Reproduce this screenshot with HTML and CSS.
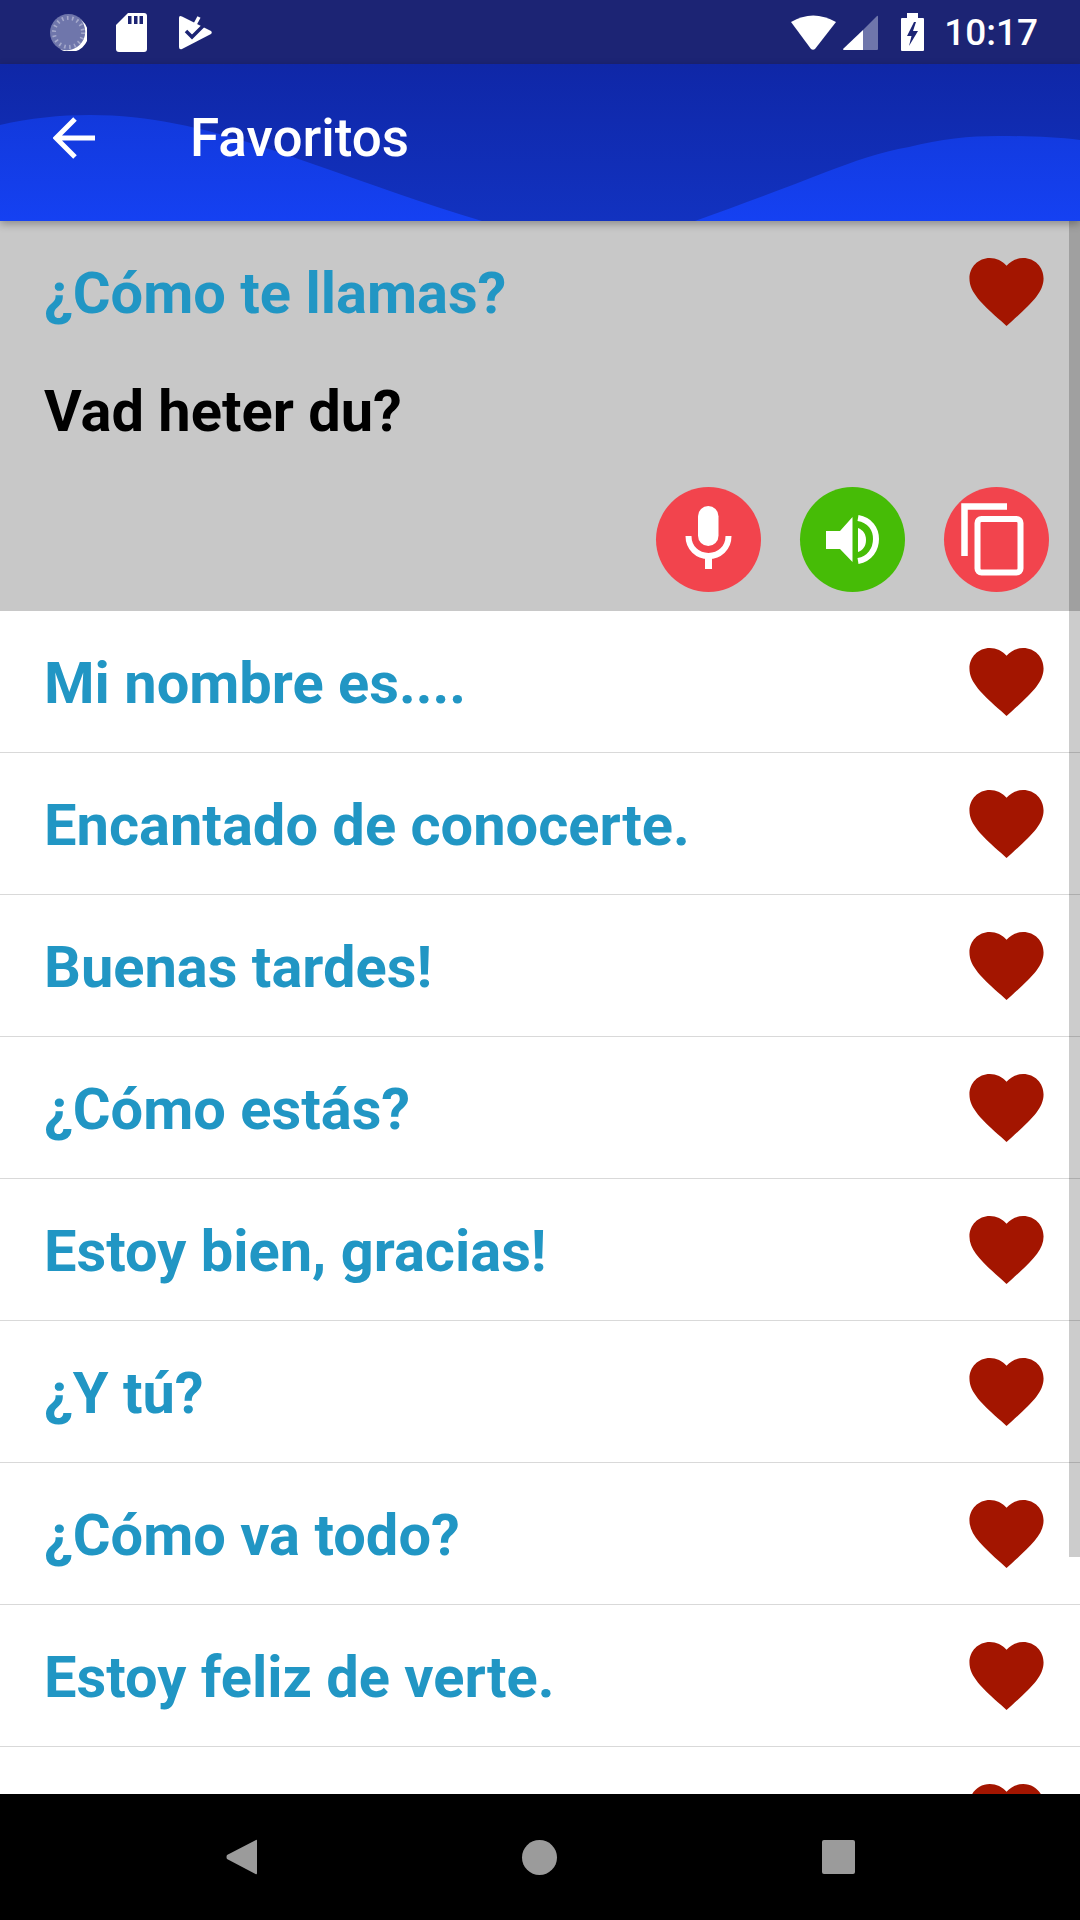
FILE: index.html
```html
<!DOCTYPE html>
<html>
    <head>
        <meta charset="utf-8">
        <title>Favoritos</title>
        <link rel="stylesheet" href="styles.css">
    </head>
    <body>
        <svg class="defs" width="0" height="0">
            <defs>
                <linearGradient id="waveFill" x1="0" y1="0" x2="0" y2="1">
                    <stop offset="0" stop-color="#1239dc"/>
                    <stop offset="1" stop-color="#1541f2"/>
                </linearGradient>
            </defs>
            <symbol id="heart" viewBox="2 3 20 18.35">
                <path d="M12 21.35l-1.45-1.32C5.4 15.36 2 12.28 2 8.5 2 5.42 4.42 3 7.5 3c1.74 0 3.41.81 4.5 2.09C13.09 3.81 14.76 3 16.5 3 19.58 3 22 5.42 22 8.5c0 3.78-3.4 6.86-8.55 11.54L12 21.35z"/>
            </symbol>
        </svg>

        <div id="statusBar">
            <svg class="moon" width="37" height="37" viewBox="0 0 37 37">
                <circle cx="18.5" cy="18.5" r="18.5" fill="#6f76ab"/>
                <path d="M31 6a18.5 18.5 0 0 1-21 29 18.5 18.5 0 0 0 27-8 18 18 0 0 0-6-21z" fill="#fff"/>
                <circle cx="18.5" cy="18.5" r="14.5" fill="none" stroke="#a5a9cb" stroke-width="4" stroke-dasharray="1.6 3.5"/>
            </svg>
            <svg class="sd" width="31" height="39" viewBox="0 0 31 39">
                <path d="M12 0H28a3 3 0 0 1 3 3V36a3 3 0 0 1-3 3H3a3 3 0 0 1-3-3V12z" fill="#fff"/>
                <path d="M12 3h3.500v8H12zM18 3h3.500v8H18zM23.500 3H27v8h-3.500z" fill="#1c2474"/>
            </svg>
            <svg class="tasks" width="33" height="35" viewBox="0 0 33 35">
                <path d="M0 3Q0 0 3 1.500L32 16Q33.500 17.500 32 19L3 34Q0 35 0 32z" fill="#fff"/>
                <path d="M7 16l6 6 11-11" fill="none" stroke="#1c2474" stroke-width="3.500"/>
                <path d="M13 15l7-13" fill="none" stroke="#fff" stroke-width="3.500"/>
            </svg>
            <div class="statusRight">
                <svg class="wifi" width="45" height="36" viewBox="0 0 45 36">
                    <path d="M0 8Q22 -5 45 8L24 35q-2 1.500-4 0z" fill="#fff"/>
                </svg>
                <svg class="signal" width="35" height="36" viewBox="0 0 35 36">
                    <path d="M20 16L34 2q1-1 1 1V35q0 1-1 1H20z" fill="#6f76ab"/>
                    <path d="M0 35L20 16V36H1q-1 0-1-1z" fill="#fff"/>
                </svg>
                <svg class="battery" width="23" height="38" viewBox="0 0 23 38">
                    <path d="M6 0h11v5h5a1 1 0 0 1 1 1V37a1 1 0 0 1-1 1H1a1 1 0 0 1-1-1V6a1 1 0 0 1 1-1h5z" fill="#fff"/>
                    <path d="M13 9L6 23h4.500L8 33l9-15h-5l3-9z" fill="#1c2474"/>
                </svg>
                <span class="time">10:17</span>
            </div>
        </div>

        <div id="toolBar">
            <svg class="wave" width="1080" height="157" viewBox="0 0 1080 157">
                <path d="M0 61C30 54 60 51 90 51C170 51 245 76 310 99C370 120 425 140 482 157L695 157C740 141 785 124 826 108C855 97 880 88 909 83C940 75 970 72 998 72C1030 72 1055 73 1080 76V157H0z" fill="url(#waveFill)"/>
            </svg>
            <svg class="backArrow" width="42" height="42" viewBox="0 0 42 42">
                <path d="M42 21H3M22 2L3 21l19 19" fill="none" stroke="#fff" stroke-width="5"/>
            </svg>
            <span class="title">Favoritos</span>
        </div>

        <div id="list">
            <div class="scrollThumb"></div>

            <div class="row selected">
                <div class="rowTop">
                    <span class="phrase">¿Cómo te llamas?</span>
                    <svg class="heart"><use href="#heart"/></svg>
                </div>
                <div class="translation">Vad heter du?</div>
                <div class="actions">
                    <div class="roundBtn red">
                        <svg width="105" height="105" viewBox="0 0 105 105">
                            <rect x="42" y="19" width="20.500" height="40" rx="10.250" fill="#fff"/>
                            <path d="M32.500 49c0 12 9 20 20 20s20-8 20-20" fill="none" stroke="#fff" stroke-width="6"/>
                            <path d="M52.500 68V82" fill="none" stroke="#fff" stroke-width="7"/>
                        </svg>
                    </div>
                    <div class="roundBtn green">
                        <svg width="105" height="105" viewBox="0 0 105 105">
                            <path d="M26 44H40L52.500 30V75L40 62H26z" fill="#fff"/>
                            <path d="M58 41c5 2 8 6 8 12s-3 10-8 12z" fill="#fff"/>
                            <path d="M58 31c12 2 18 11 18 21s-6 20-18 22" fill="none" stroke="#fff" stroke-width="6"/>
                        </svg>
                    </div>
                    <div class="roundBtn red">
                        <svg width="105" height="105" viewBox="0 0 105 105">
                            <path d="M63 19.500H20.500V69" fill="none" stroke="#fff" stroke-width="6.500"/>
                            <rect x="33.500" y="32" width="43" height="53.500" rx="4" fill="none" stroke="#fff" stroke-width="6"/>
                        </svg>
                    </div>
                </div>
            </div>

            <div class="row"><span class="phrase">Mi nombre es....</span><svg class="heart"><use href="#heart"/></svg></div>
            <div class="row"><span class="phrase">Encantado de conocerte.</span><svg class="heart"><use href="#heart"/></svg></div>
            <div class="row"><span class="phrase">Buenas tardes!</span><svg class="heart"><use href="#heart"/></svg></div>
            <div class="row"><span class="phrase">¿Cómo estás?</span><svg class="heart"><use href="#heart"/></svg></div>
            <div class="row"><span class="phrase">Estoy bien, gracias!</span><svg class="heart"><use href="#heart"/></svg></div>
            <div class="row"><span class="phrase">¿Y tú?</span><svg class="heart"><use href="#heart"/></svg></div>
            <div class="row"><span class="phrase">¿Cómo va todo?</span><svg class="heart"><use href="#heart"/></svg></div>
            <div class="row"><span class="phrase">Estoy feliz de verte.</span><svg class="heart"><use href="#heart"/></svg></div>
            <div class="row"><svg class="heart"><use href="#heart"/></svg></div>
        </div>

        <div id="navBar">
            <svg class="navIcon" width="31" height="36" viewBox="0 0 31 36">
                <path d="M30 1Q31 0 31 2V34Q31 36 29.500 35L1 20Q0 18 1 16z" fill="#9b9b9b"/>
            </svg>
            <div class="navCircle"></div>
            <div class="navSquare"></div>
        </div>
    </body>
</html>
```

FILE: styles.css
```css
*{
    box-sizing:border-box;
}

body{
    margin:0px;
    padding:0px;
    width:1080px;
    height:1920px;
    display:flex;
    flex-direction:column;
    overflow:hidden;
    font-family:"Roboto", "Liberation Sans", sans-serif;
    background-color:white;
}

.defs{
    position:absolute;
}

#statusBar{
    height:64px;
    flex:none;
    display:flex;
    align-items:center;
    padding-left:50px;
    padding-right:42px;
    background-color:#1c2474;
}

.sd{
    margin-left:29px;
}

.tasks{
    margin-left:32px;
}

.statusRight{
    margin-left:auto;
    display:flex;
    align-items:center;
}

.signal{
    margin-left:7px;
}

.battery{
    margin-left:23px;
}

.time{
    margin-left:20px;
    color:white;
    font-size:37px;
    font-weight:500;
}

#toolBar{
    position:relative;
    z-index:2;
    height:157px;
    flex:none;
    display:flex;
    align-items:center;
    padding-left:53px;
    padding-bottom:10px;
    background:linear-gradient(#0f27a7, #1232c0);
    box-shadow:0px 3px 8px rgba(0,0,0,0.3);
}

.wave{
    position:absolute;
    left:0;
    top:0;
}

.backArrow{
    position:relative;
    flex:none;
}

.title{
    position:relative;
    margin-left:95px;
    color:white;
    font-size:53px;
    font-weight:500;
}

#list{
    position:relative;
    flex:1;
    overflow:hidden;
}

.scrollThumb{
    position:absolute;
    right:0;
    top:0;
    width:11px;
    height:1336px;
    background-color:rgba(0,0,0,0.2);
}

.row{
    height:142px;
    display:flex;
    align-items:center;
    justify-content:space-between;
    padding-left:44px;
    padding-right:36px;
    border-bottom:1px solid #d9d9d9;
}

.row.selected{
    height:390px;
    display:block;
    background-color:#c8c8c8;
    border-bottom:none;
}

.rowTop{
    height:142px;
    display:flex;
    align-items:center;
    justify-content:space-between;
}

.phrase{
    padding-top:2px;
    color:#2196c4;
    font-size:57.8px;
    font-weight:700;
}

.translation{
    margin-top:13px;
    height:70px;
    line-height:70px;
    color:black;
    font-size:57.8px;
    font-weight:700;
}

.actions{
    margin-top:41px;
    margin-right:-5px;
    display:flex;
    justify-content:flex-end;
    gap:39px;
}

.roundBtn{
    width:105px;
    height:105px;
    border-radius:50%;
}

.roundBtn svg{
    display:block;
}

.red{
    background-color:#f2444d;
}

.green{
    background-color:#46bc06;
}

.heart{
    width:75px;
    height:68px;
    flex:none;
    fill:#a31500;
    margin-left:auto;
}

#navBar{
    position:relative;
    z-index:2;
    height:126px;
    flex:none;
    background-color:black;
    display:flex;
    align-items:center;
    padding-left:226px;
}

.navCircle{
    margin-left:265px;
    width:35px;
    height:35px;
    border-radius:50%;
    background-color:#9b9b9b;
}

.navSquare{
    margin-left:265px;
    width:33px;
    height:34px;
    border-radius:2px;
    background-color:#9b9b9b;
}
```
